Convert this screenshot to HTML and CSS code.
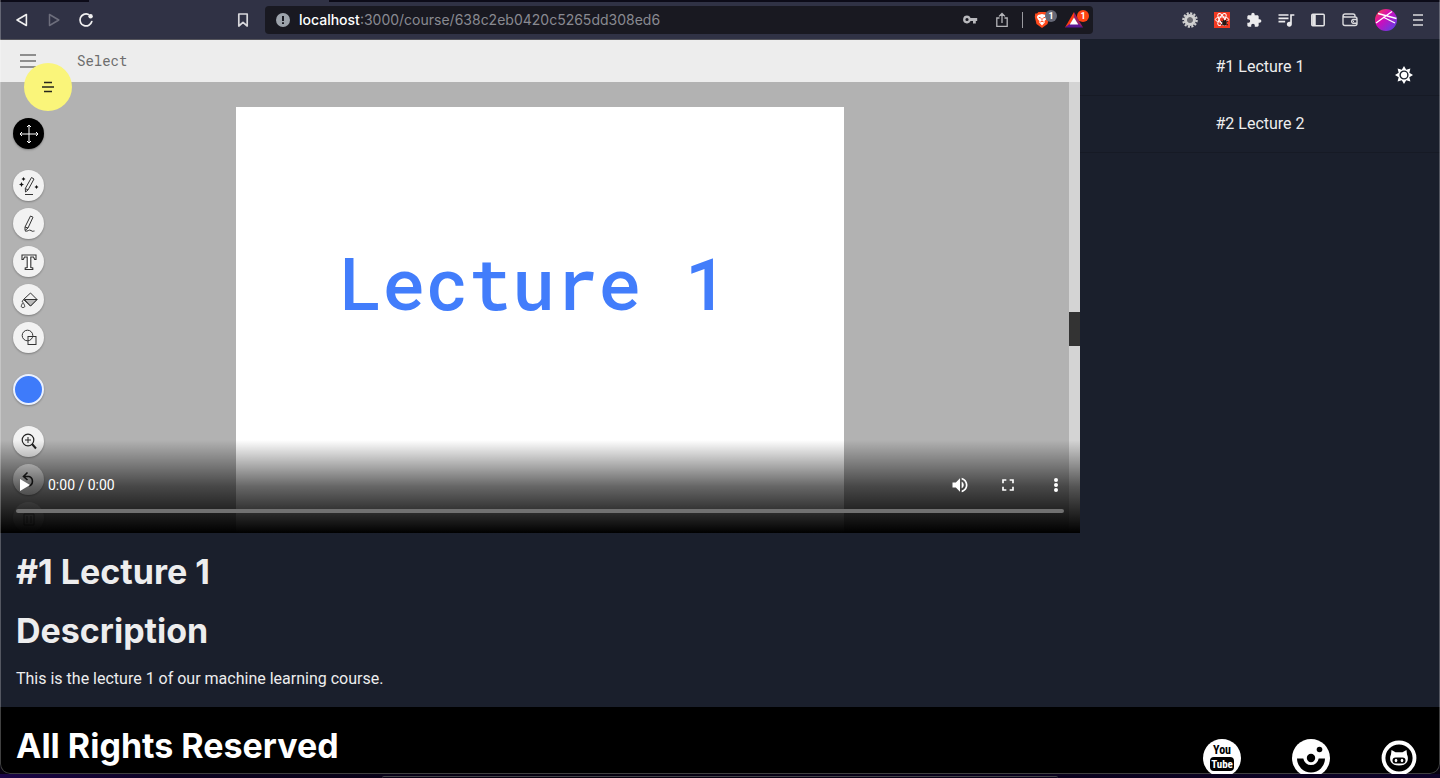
FILE: index.html
```html
<!DOCTYPE html>
<html lang="en">
<head>
<meta charset="utf-8">
<meta name="viewport" content="width=device-width, initial-scale=1">
<title>Lecture 1</title>
<link rel="stylesheet" href="styles.css">
</head>
<body>
<div class="window">
  <div class="tabs"><span class="tab-active"></span></div>
  <header class="toolbar">
    <nav class="nav-buttons" aria-label="History">
      <button class="tool" aria-label="Back"><svg width="16" height="16" viewBox="0 0 16 16" fill="none" stroke="#f0f0f0" stroke-width="1.6" stroke-linejoin="round"><path d="M12.400 2.500V13.500L3 8z"/></svg></button>
      <button class="tool" aria-label="Forward"><svg width="16" height="16" viewBox="0 0 16 16" fill="none" stroke="#6d6e7c" stroke-width="1.500" stroke-linejoin="round"><path d="M3.500 2.500V13.500L12.800 8z"/></svg></button>
      <button class="tool" aria-label="Reload"><svg width="16" height="16" viewBox="0 0 16 16" fill="none" stroke="#f0f0f0" stroke-width="1.700" stroke-linecap="round"><path d="M10.500 2.500A6 6 0 1 0 13.800 9.500"/><circle cx="12.600" cy="4.200" r="2.200" fill="#f0f0f0" stroke="none"/></svg></button>
    </nav>
    <div class="location">
      <button class="tool" aria-label="Bookmark"><svg width="16" height="16" viewBox="0 0 16 16" fill="none" stroke="#d8d8dc" stroke-width="1.700" stroke-linejoin="round"><path d="M3.800 2H12.200V14L8 10.300 3.800 14z"/></svg></button>
      <div class="omnibox">
        <svg class="site-info" width="14" height="14" viewBox="0 0 14 14"><circle cx="7" cy="7" r="7" fill="#9da3ab"/><path d="M6 3H8V8H6zM6 9.200H8V11H6z" fill="#191921"/></svg>
        <div class="url" role="textbox" aria-label="Address"><span class="host">localhost</span>:3000/course/638c2eb0420c5265dd308ed6</div>
        <button class="tool" aria-label="Passwords"><svg width="16" height="16" viewBox="0 0 16 16"><path fill="#b9b9bd" fill-rule="evenodd" d="M5 3.600A3.900 3.900 0 1 0 8.600 9H11V11.500H13.800V9H15.200V6H8.600A3.900 3.900 0 0 0 5 3.600zM5 5.900A1.600 1.600 0 1 1 5 9.100 1.600 1.600 0 0 1 5 5.900z"/></svg></button>
        <button class="tool" aria-label="Share"><svg width="16" height="16" viewBox="0 0 16 16" fill="none" stroke="#b4b4b8" stroke-width="1.300"><path d="M5.500 6H2.800V14.300H13.200V6H10.500M8 11V1.500M5 4.400L8 1.500 11 4.400"/></svg></button>
        <span class="separator"></span>
        <button class="tool badged" aria-label="Shields">
          <svg width="16" height="18" viewBox="0 0 16 18"><path fill="#ff4a1c" d="M4.500 1H11.500L13 2.500H14.800L15.200 6 13.500 13 8 17 2.500 13 .8 6 1.200 2.500H3z"/><path fill="#fff" d="M4 4L8 3 12 4 13.200 6 12 8.500 10.500 10 10.800 11.500 8 14.500 5.200 11.500 5.500 10 4 8.500 2.800 6z"/><path stroke="#ff4a1c" fill="none" d="M4.800 6.300L6.800 7M11.200 6.300L9.200 7M8 7V9.500M6.300 11L8 10.200 9.700 11"/></svg>
          <span class="badge badge-grey">1</span>
        </button>
        <button class="tool badged" aria-label="Rewards">
          <svg width="18" height="16" viewBox="0 0 18 16"><path fill="#ff3b14" d="M9 0L9 6 4.500 13 0 15.500z"/><path fill="#9e1f63" d="M9 0L18 15.500 13 13 9 6z"/><path fill="#5a1692" d="M0 15.500L4.500 12H13.500L18 15.500z"/><path fill="#fff" d="M9 5.500L13.300 12.600H4.700z"/></svg>
          <span class="badge badge-red">1</span>
        </button>
      </div>
    </div>
    <div class="extensions">
      <button class="tool" aria-label="Settings extension"><svg width="16" height="16" viewBox="0 0 16 16"><circle cx="8" cy="8" r="6.700" fill="none" stroke="#cfcfcf" stroke-width="2.200" stroke-dasharray="2.100 1.400"/><circle cx="8" cy="8" r="4.300" fill="none" stroke="#d0d0d0" stroke-width="3.400"/><circle cx="8" cy="8" r="2.700" fill="#6a6a70"/></svg></button>
      <button class="tool" aria-label="React developer tools"><svg width="16" height="16" viewBox="0 0 16 16"><path fill="#f23a22" d="M0 0H16V16H0z"/><g fill="none" stroke="#fff" stroke-width="1"><ellipse cx="8" cy="7.500" rx="6.700" ry="2.600"/><ellipse cx="8" cy="7.500" rx="6.700" ry="2.600" transform="rotate(60 8 7.500)"/><ellipse cx="8" cy="7.500" rx="6.700" ry="2.600" transform="rotate(120 8 7.500)"/></g><ellipse cx="10.500" cy="11" rx="2.200" ry="2.800" fill="#251512"/><path stroke="#251512" d="M7 9L14 13M14 9L7 13M9 7.500L10 9M12.500 7.500L11 9"/></svg></button>
      <button class="tool" aria-label="Extensions"><svg width="16" height="16" viewBox="0 0 24 24" fill="#ececee"><path d="M20.500 11H19V7c0-1.100-.9-2-2-2h-4V3.500C13 2.120 11.880 1 10.500 1S8 2.120 8 3.500V5H4c-1.100 0-1.990.9-1.990 2v3.800H3.500c1.490 0 2.700 1.210 2.700 2.700s-1.210 2.700-2.700 2.700H2V20c0 1.100.9 2 2 2h3.800v-1.500c0-1.490 1.210-2.700 2.700-2.700 1.490 0 2.700 1.210 2.700 2.700V22H17c1.100 0 2-.9 2-2v-4h1.500c1.380 0 2.500-1.120 2.500-2.500S21.880 11 20.500 11z"/></svg></button>
      <button class="tool" aria-label="Media"><svg width="20" height="20" viewBox="0 0 24 24" fill="#ececee"><path d="M15 5H3v2h12V5zm0 4H3v2h12v-2zM3 15h8v-2H3v2zM17 5v9.180c-.31-.11-.65-.18-1-.18-1.660 0-3 1.340-3 3s1.340 3 3 3 3-1.340 3-3V7h3V5h-5z"/></svg></button>
      <button class="tool" aria-label="Sidebar"><svg width="16" height="16" viewBox="0 0 16 16" fill="none" stroke="#e4e4e6" stroke-width="1.500"><rect x="1.800" y="2.300" width="12.400" height="11.400" rx="1"/><path d="M4 3V13" stroke-width="3.500"/></svg></button>
      <button class="tool" aria-label="Wallet"><svg width="16" height="16" viewBox="0 0 16 16" fill="none" stroke="#dadadd" stroke-width="1.400"><path d="M13 5V4A2 2 0 0 0 11 2H3A2 2 0 0 0 1 4V11.500A2 2 0 0 0 3 13.500H13A2 2 0 0 0 15 11.500V7A2 2 0 0 0 13 5H3A2 2 0 0 1 1 3.500"/><path d="M15 7.500H11A2 2 0 0 0 11 11.300H15M11 9.400H12"/></svg></button>
      <button class="tool tool-avatar" aria-label="Profile"><svg width="22" height="22" viewBox="0 0 22 22"><defs><linearGradient id="avatar" x1="0" y1="0" x2="1" y2="1"><stop offset="0" stop-color="#ff4b3a"/><stop offset=".4" stop-color="#d40ab8"/><stop offset="1" stop-color="#4a48f0"/></linearGradient></defs><circle cx="11" cy="11" r="11" fill="url(#avatar)"/><path d="M3 4.500L21.500 9.500M1 14L17 2.500M8 8L20 14" fill="none" stroke="#fff" stroke-width="1.300"/></svg></button>
      <button class="tool" aria-label="Menu"><svg width="16" height="16" viewBox="0 0 16 16" stroke="#dadadd" stroke-width="1.600"><path d="M3 3H13M3 8H13M3 13H13"/></svg></button>
    </div>
  </header>

  <button class="menu-button" aria-label="Open menu"><svg width="12" height="14" viewBox="0 0 12 14" stroke="#26261c" stroke-width="1.500"><path d="M2 2.500H10M0 7H12M2 11.500H10"/></svg></button>
  <button class="theme-button" aria-label="Toggle theme"><svg width="18" height="18" viewBox="0 0 18 18"><path fill="#fff" d="M9 0L11.200 3.700 15.400 2.600 14.300 6.800 18 9 14.300 11.200 15.400 15.400 11.200 14.300 9 18 6.800 14.300 2.600 15.400 3.700 11.200 0 9 3.700 6.800 2.600 2.600 6.800 3.700z"/><circle cx="9" cy="9" r="3.900" fill="#fff" stroke="#1a202c" stroke-width="1.400"/></svg></button>

  <main class="course">
    <section class="lecture">
      <div class="player">
        <div class="app-bar">
          <svg width="16" height="14" viewBox="0 0 16 14" stroke="#8e8e8e" stroke-width="2"><path d="M0 1H16M0 7H16M0 13H16"/></svg>
          <span>Select</span>
        </div>
        <div class="app-body">
          <div class="tools">
            <div class="tool-group">
              <span class="disc disc-black"><svg width="20" height="20" viewBox="0 0 20 20" fill="none" stroke="#fff"><path d="M10 1V19M1 10H19M8 3L10 1 12 3M8 17L10 19 12 17M3 8L1 10 3 12M17 8L19 10 17 12"/></svg></span>
            </div>
            <div class="tool-group">
              <span class="disc"><svg width="20" height="20" viewBox="0 0 20 20" fill="none" stroke="#333"><path d="M12.500 1.500L15 3 9 14 6.500 16 6.300 12.500zM6.300 12.500L9 14M6 18.500H14"/><path fill="#111" stroke="none" d="M2.500 6L3.300 7.700 5 8.500 3.300 9.300 2.500 11 1.700 9.300 0 8.500 1.700 7.700zM4.500 1L5.200 2.300 6.500 3 5.200 3.700 4.500 5 3.800 3.700 2.500 3 3.800 2.300zM17.500 9L18.200 10.300 19.500 11 18.200 11.700 17.500 13 16.800 11.700 15.500 11 16.800 10.300z"/></svg></span>
              <span class="disc"><svg width="20" height="20" viewBox="0 0 20 20" fill="none" stroke="#333"><path d="M11.500 2L14 3.200 9 14 6 16.500 6 13zM6 13L9 14M6 17C9 18 10 15 12 16.500S14 17 15.500 17"/></svg></span>
              <span class="disc"><svg width="20" height="20" viewBox="0 0 20 20" fill="#fff" stroke="#333" stroke-width="1.100"><path d="M3 3H17V7.500H15.700L14.500 5H11.800V15.500L13.800 16V17.500H6.200V16L8.200 15.500V5H5.500L4.300 7.500H3z"/></svg></span>
              <span class="disc"><svg width="20" height="20" viewBox="0 0 20 20" fill="none" stroke="#333"><path d="M4.500 9.500L11.500 3 18 9.500 11.500 16z"/><path fill="#bbb" d="M5.500 9.500H18L11.500 16z"/><path d="M4 12.500C2 15.500 1.500 17.500 4 17.500S6 15.500 4 12.500zM4.500 9.500L3 12"/></svg></span>
              <span class="disc"><svg width="20" height="20" viewBox="0 0 20 20" fill="none" stroke="#333"><circle cx="8.500" cy="7.500" r="5.300"/><rect x="9" y="8.500" width="8" height="8"/></svg></span>
            </div>
            <div class="tool-group"><span class="disc disc-blue"></span></div>
            <div class="tool-group">
              <span class="disc"><svg width="20" height="20" viewBox="0 0 20 20" fill="none" stroke="#222"><circle cx="9" cy="8" r="5.800" stroke-width="1.200"/><path d="M6 8H12M9 5V11"/><path d="M13 12L17 16.500" stroke-width="2"/></svg></span>
              <span class="disc"><svg width="20" height="20" viewBox="0 0 20 20" fill="none" stroke="#222" stroke-width="1.600"><path d="M8.500 2.500L4.500 6.500 8.500 10M4.500 6.500H10A5 5 0 0 1 10 16"/></svg></span>
              <span class="disc disc-faded"><svg width="20" height="20" viewBox="0 0 20 20" fill="none" stroke="#333"><path d="M5 6H15V17H5zM4 4.500H16M8 8V15M12 8V15"/></svg></span>
            </div>
          </div>
          <div class="slide">Lecture 1</div>
          <div class="gutter"></div>
          <div class="scroll-track"><span class="scroll-thumb"></span></div>
        </div>
        <div class="controls">
          <div class="control-row">
            <button class="control control-play" aria-label="Play"><svg width="12" height="14" viewBox="0 0 12 14"><path fill="#fff" d="M0 1V13L10 7z"/></svg></button>
            <span class="time">0:00 / 0:00</span>
            <button class="control" aria-label="Mute"><svg width="20" height="20" viewBox="0 0 24 24" fill="#fff"><path d="M3 9v6h4l5 5V4L7 9H3zm13.500 3c0-1.770-1.020-3.290-2.500-4.030v8.050c1.480-.73 2.500-2.250 2.500-4.020zM14 3.230v2.060c2.890.86 5 3.540 5 6.710s-2.110 5.850-5 6.710v2.060c4.010-.91 7-4.490 7-8.770s-2.990-7.860-7-8.770z"/></svg></button>
            <button class="control" aria-label="Full screen"><svg width="20" height="20" viewBox="0 0 24 24" fill="#fff"><path d="M7 14H5v5h5v-2H7v-3zm-2-4h2V7h3V5H5v5zm12 7h-3v2h5v-5h-2v3zM14 5v2h3v3h2V5h-5z"/></svg></button>
            <button class="control" aria-label="More options"><svg width="20" height="20" viewBox="0 0 20 20" fill="#fff"><circle cx="10" cy="5" r="2"/><circle cx="10" cy="10" r="2"/><circle cx="10" cy="15" r="2"/></svg></button>
          </div>
          <input class="seek" type="range" min="0" max="100" value="0" aria-label="Seek">
        </div>
      </div>
      <div class="details">
        <h1 class="heading">#1 Lecture 1</h1>
        <h2 class="heading">Description</h2>
        <p class="summary">This is the lecture 1 of our machine learning course.</p>
      </div>
    </section>
    <aside class="playlist">
      <button class="playlist-item">#1 Lecture 1</button>
      <button class="playlist-item">#2 Lecture 2</button>
    </aside>
  </main>

  <footer class="footer">
    <h2 class="heading heading-footer">All Rights Reserved</h2>
    <div class="social">
      <a href="#youtube" aria-label="YouTube"><svg width="38" height="38" viewBox="0 0 38 38"><circle cx="19" cy="19" r="19" fill="#fff"/><rect x="7" y="18" width="24" height="14" rx="4" fill="#000"/><text class="logo-text" x="19" y="15" text-anchor="middle" fill="#000">You</text><text class="logo-text logo-text-small" x="19" y="29" text-anchor="middle" fill="#fff">Tube</text></svg></a>
      <a href="#instagram" aria-label="Instagram"><svg width="38" height="38" viewBox="0 0 38 38"><circle cx="19" cy="19" r="19" fill="#fff"/><path fill="#000" d="M5 19.500H11.300A7.800 7.800 0 0 0 26.700 19.500H33A14 14 0 0 1 5 19.500z"/><circle cx="19" cy="19" r="4.200" fill="#000"/><circle cx="27.500" cy="10.500" r="2.800" fill="#000"/></svg></a>
      <a href="#github" aria-label="GitHub"><svg width="36" height="36" viewBox="0 0 36 36"><circle cx="18" cy="19" r="15.500" fill="none" stroke="#fff" stroke-width="3.800"/><path fill="#fff" d="M10.500 11L14.500 13.200H21.500L25.500 11 26 15.500Q27.500 18 26.500 22 24.500 26.500 18 26.500T9.500 22Q8.500 18 10 15.500z"/><rect x="11.500" y="18.500" width="13" height="6" rx="3" fill="#000"/><ellipse cx="15" cy="21.500" rx="1.300" ry="1.800" fill="#fff"/><ellipse cx="21" cy="21.500" rx="1.300" ry="1.800" fill="#fff"/></svg></a>
    </div>
  </footer>
</div>
<div class="desktop"><span class="dock"></span></div>
</body>
</html>
```

FILE: styles.css
```css
* {
  box-sizing: border-box;
}

body {
  margin: 0;
  min-height: 100vh;
  display: flex;
  flex-direction: column;
  background: #07010f;
  color: #ededee;
  font: 16px/24px Roboto, "Liberation Sans", sans-serif;
}

button {
  border: 0;
  padding: 0;
  background: none;
  color: inherit;
  font: inherit;
}

svg {
  display: block;
}

.window {
  position: relative;
  flex: 1;
  display: flex;
  flex-direction: column;
  overflow: hidden;
  border-radius: 0 0 10px 10px;
  background: #1a1f2c;
}

/* Thin outline drawn over the window contents */
.window::after {
  content: "";
  position: absolute;
  inset: 0;
  border: 1px solid rgba(255, 255, 255, 0.25);
  border-top: 0;
  border-radius: 0 0 10px 10px;
  pointer-events: none;
}

/* Browser toolbar */
.tabs {
  display: grid;
  grid-template-columns: 89fr 240fr 1111fr;
  height: 2px;
  background: #0c0b18;
}

.tab-active {
  grid-column: 2;
  background: #303245;
}

.toolbar {
  display: grid;
  grid-template-columns: 227fr 866fr 347fr;
  align-items: start;
  height: 37px;
  padding-top: 4px;
  background: #303245;
}

.nav-buttons {
  display: flex;
  padding-left: 6px;
}

.location {
  display: flex;
  align-items: center;
  gap: 6px;
  min-width: 0;
}

.extensions {
  display: flex;
  justify-content: flex-end;
  padding-right: 6px;
}

.tool {
  flex: none;
  width: 32px;
  height: 28px;
  display: grid;
  place-items: center;
}

.tool-avatar {
  margin-left: 4px;
}

.omnibox {
  flex: 1;
  display: flex;
  align-items: center;
  min-width: 0;
  height: 28px;
  padding: 0 3px 0 11px;
  border-radius: 4px;
  background: #191921;
}

.site-info {
  flex: none;
}

.url {
  flex: 1;
  min-width: 0;
  margin-left: 9px;
  overflow: hidden;
  white-space: nowrap;
  font-family: Inter, sans-serif;
  font-size: 14px;
  color: #898a91;
}

.host {
  font-weight: 500;
  color: #fff;
}

.separator {
  width: 1px;
  height: 16px;
  margin: 0 3px 0 4px;
  background: #9a9a9f;
}

.badged {
  position: relative;
}

.badge {
  position: absolute;
  top: 4px;
  right: 1px;
  width: 12px;
  height: 12px;
  border-radius: 6px;
  color: #fff;
  font-size: 9px;
  font-weight: 700;
  line-height: 12px;
  text-align: center;
}

.badge-grey {
  background: #666876;
}

.badge-red {
  background: #ff4314;
}

/* Floating page buttons */
.menu-button {
  position: absolute;
  z-index: 2;
  top: 63px;
  left: 24px;
  width: 48px;
  height: 48px;
  display: grid;
  place-items: center;
  border-radius: 50%;
  background: #faf57a;
}

.theme-button {
  position: absolute;
  z-index: 2;
  top: 55px;
  right: 16px;
  width: 40px;
  height: 40px;
  display: grid;
  place-items: center;
}

/* Course page */
.course {
  flex: 1;
  display: grid;
  grid-template-columns: 3fr 1fr;
}

.lecture {
  min-width: 0;
}

.player {
  position: relative;
  display: flex;
  flex-direction: column;
  aspect-ratio: 1080 / 494;
  overflow: hidden;
  border-top: 1px solid #55555c;
  background: #b2b2b2;
}

.app-bar {
  flex: none;
  display: flex;
  align-items: center;
  gap: 41px;
  height: 42px;
  padding-left: 20px;
  background: #ededed;
  color: #6e6e6e;
  font: 14px/24px "Roboto Mono", "DejaVu Sans Mono", monospace;
}

.app-body {
  flex: 1;
  min-height: 0;
  display: grid;
  grid-template-columns: 236fr 608fr 225fr 11fr;
}

.tools {
  display: flex;
  flex-direction: column;
  gap: 21px;
  min-height: 0;
  padding: 36px 0 0 13px;
}

.tool-group {
  display: flex;
  flex-direction: column;
  gap: 7px;
}

.disc {
  flex: none;
  width: 31px;
  height: 31px;
  display: grid;
  place-items: center;
  border-radius: 50%;
  background: #f2f2f2;
  box-shadow: 0 1px 2px rgba(0, 0, 0, 0.3);
}

.disc-black {
  background: #000;
}

.disc-blue {
  border: 2px solid #eaf1ff;
  background: #3e7bfa;
}

.disc-faded {
  opacity: 0.6;
}

.slide {
  margin-top: 25px;
  padding: 134px 0 0 103px;
  background: #fff;
  color: #427dfb;
  font: 500 72px/84px "Roboto Mono", "DejaVu Sans Mono", monospace;
  white-space: nowrap;
}

.scroll-track {
  padding-top: 230px;
  background: #d4d4d4;
}

.scroll-thumb {
  display: block;
  height: 34px;
  background: #333;
}

.controls {
  position: absolute;
  inset: auto 0 0;
  display: flex;
  flex-direction: column;
  justify-content: flex-end;
  height: 93px;
  padding: 0 16px 20px;
  background: linear-gradient(rgba(0, 0, 0, 0), rgba(0, 0, 0, 0.6) 50%, #000);
}

.control-row {
  display: flex;
  align-items: center;
  gap: 16px;
  height: 48px;
}

.control {
  width: 32px;
  height: 32px;
  display: grid;
  place-items: center;
}

.control:last-child {
  margin-right: -8px;
}

.control-play {
  width: 16px;
  justify-items: end;
}

.time {
  flex: 1;
  color: #fff;
  font-size: 14px;
}

.seek {
  appearance: none;
  width: 100%;
  height: 4px;
  margin: 0;
  border-radius: 2px;
  background: #717171;
}

.seek::-webkit-slider-thumb {
  appearance: none;
  width: 0;
  height: 0;
}

.details {
  display: flex;
  flex-direction: column;
  gap: 14px;
  padding: 16px;
}

.heading {
  margin: 0;
  font-family: Inter, sans-serif;
  font-size: 34px;
  font-weight: 700;
  line-height: 45px;
}

.summary {
  margin: 0;
}

.playlist {
  min-width: 0;
}

.playlist-item {
  display: block;
  width: 100%;
  padding: 16px;
  border-bottom: 1px solid #161a25;
  text-align: center;
}

.footer {
  display: flex;
  justify-content: space-between;
  height: 67px;
  padding: 16px 23px 0 16px;
  background: #000;
}

.heading-footer {
  color: #fff;
}

.social {
  display: flex;
  gap: 51px;
  padding-top: 16px;
}

.logo-text {
  font: bold 12px "Liberation Sans Narrow", "Roboto Condensed", "DejaVu Sans Condensed", sans-serif;
}

.logo-text-small {
  font-size: 11px;
}

/* Desktop visible under the window */
.desktop {
  display: flex;
  flex-direction: column;
  align-items: center;
  justify-content: flex-end;
  height: 4px;
  background: linear-gradient(90deg, #1b0547, #0b0220 12%, #06010f 40%, #0d0228);
}

.dock {
  width: 47%;
  height: 2px;
  border-top: 1px solid #45454a;
  border-radius: 8px 8px 0 0;
}
```
